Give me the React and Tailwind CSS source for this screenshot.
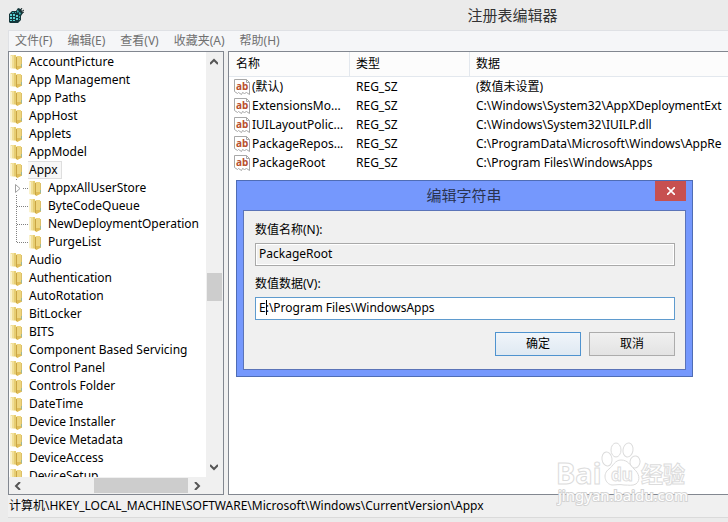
import React from 'react'

const BEFORE = ['AccountPicture', 'App Management', 'App Paths', 'AppHost', 'Applets', 'AppModel']
const CHILDREN = ['AppxAllUserStore', 'ByteCodeQueue', 'NewDeploymentOperation', 'PurgeList']
const AFTER = [
  'Audio',
  'Authentication',
  'AutoRotation',
  'BitLocker',
  'BITS',
  'Component Based Servicing',
  'Control Panel',
  'Controls Folder',
  'DateTime',
  'Device Installer',
  'Device Metadata',
  'DeviceAccess',
  'DeviceSetup',
]

const VALUES = [
  { name: '(默认)', type: 'REG_SZ', data: '(数值未设置)' },
  { name: 'ExtensionsMo...', type: 'REG_SZ', data: 'C:\\Windows\\System32\\AppXDeploymentExt' },
  { name: 'IUILayoutPolic...', type: 'REG_SZ', data: 'C:\\Windows\\System32\\IUILP.dll' },
  { name: 'PackageRepos...', type: 'REG_SZ', data: 'C:\\ProgramData\\Microsoft\\Windows\\AppRe' },
  { name: 'PackageRoot', type: 'REG_SZ', data: 'C:\\Program Files\\WindowsApps' },
]

function RegeditIcon() {
  return (
    <svg className="ml-px w-4 h-4" viewBox="0 0 16 16" aria-hidden="true">
      <path d="M0 7l3-3h4l2-3 3 1 1 2 1 2-2 3v4l-3 3H1l-1-1z" fill="#14363a" />
      <path d="M1 7h2v2H1zM4 7h2v2H4zM7 8h2v2H7zM1 10h2v2H1zM4 10h2v2H4zM7 11h2v2H7zM1 13h2v1H1zM4 13h2v1H4z" fill="#5ccfd0" />
      <path d="M3 5h2v1H3zM6 5h1v1H6zM10 9h1v2h-1zM10 12h1v1h-1z" fill="#35a7aa" />
      <path d="M8 3l2 1-1 2-1-1zM10 5l2 1-1 2-1-1z" fill="#3fb1b4" />
      <path d="M11 4l2-3M12 5l3-2M13 6l2-1" stroke="#1c2b2d" strokeWidth="1" />
    </svg>
  )
}

function FolderIcon() {
  return (
    <svg className="w-[15px] h-4 shrink-0" viewBox="0 0 15 16" aria-hidden="true">
      <path d="M1 2l1-1h5v14l-6-1z" fill="#f1df98" />
      <path d="M1 2h2v12H1z" fill="#faf2cd" />
      <path d="M5 1h2v13H5z" fill="#e6cd72" />
      <path d="M7 3l1-1h4v12l-4 2-1-1z" fill="#eed57e" />
      <path d="M7 3h1v12H7z" fill="#c9a544" />
      <path d="M8 12h4v2l-4 2z" fill="#e0bd58" />
      <path d="M12 3h1v11h-1z" fill="#dcc06a" />
      <path d="M12 10h1v3h-1z" fill="#9fb896" />
    </svg>
  )
}

function StringIcon() {
  return (
    <svg className="w-4 h-4 shrink-0" viewBox="0 0 16 16" aria-hidden="true">
      <path
        d="M.5.5h12l3 3v12l-3-2-2 1-2-1-1 2-3-2-1 1-3-2z"
        fill="#fff"
        stroke="#a8a8a8"
      />
      <path d="M12.500.5v3h3" fill="none" stroke="#a8a8a8" />
      <text x="2" y="11" fontSize="10" fontWeight="700" fill="#b9502f" fontFamily="Noto Sans, sans-serif">ab</text>
    </svg>
  )
}

function Chevron({ d }) {
  return (
    <svg className="w-2 h-2" viewBox="0 0 8 8" fill="none" stroke="#555" strokeWidth="2" aria-hidden="true">
      <path d={d} />
    </svg>
  )
}

function TreeItem({ label, selected }) {
  return (
    <li className="flex items-center h-[18px]">
      <FolderIcon />
      <span
        className={
          selected
            ? 'ml-1 pl-px pr-[3px] h-[18px] leading-[16px] border border-l-0 border-[#dedede] bg-[#f7f7f7]'
            : 'ml-[5px]'
        }
      >
        {label}
      </span>
    </li>
  )
}

function TreeChild({ label, expandable, last }) {
  return (
    <li className="flex items-center h-[18px]">
      <svg className="w-[19px] h-[18px] shrink-0" viewBox="0 0 19 18" fill="none" aria-hidden="true">
        <path d={last ? 'M7.500 0V9' : 'M7.500 0V18'} stroke="#808080" strokeDasharray="1 1" />
        <path d="M8 9.500H19" stroke="#808080" strokeDasharray="1 1" />
        {expandable && <path d="M4 2h10v14H4z" fill="#fff" />}
        {expandable && <path d="M6.500 5.500v8l4.500-4z" fill="#fff" stroke="#a0a0a0" />}
      </svg>
      <FolderIcon />
      <span className="ml-[5px]">{label}</span>
    </li>
  )
}

function KeyTree() {
  return (
    <section className="w-[216px] shrink-0 flex flex-col bg-[#f0f0f0] border border-[#828790]">
      <div className="flex flex-1 min-h-0">
        <ul className="flex-1 min-w-0 overflow-hidden bg-white pt-px whitespace-nowrap">
          {BEFORE.map((label) => (
            <TreeItem key={label} label={label} />
          ))}
          <TreeItem label="Appx" selected />
          {CHILDREN.map((label, i) => (
            <TreeChild key={label} label={label} expandable={i === 0} last={i === CHILDREN.length - 1} />
          ))}
          {AFTER.map((label) => (
            <TreeItem key={label} label={label} />
          ))}
        </ul>
        <div className="w-[17px] pr-px flex flex-col items-center">
          <button className="h-5 flex items-center" aria-label="Scroll up">
            <Chevron d="M0 6l4-4 4 4" />
          </button>
          <div className="grow-[200]" />
          <div className="w-[15px] h-7 bg-[#cdcdcd]" />
          <div className="grow-[156]" />
          <button className="h-5 flex items-center" aria-label="Scroll down">
            <Chevron d="M0 2l4 4 4-4" />
          </button>
        </div>
      </div>
      <div className="h-[17px] flex items-center pr-[17px]">
        <button className="w-[18px] flex justify-center" aria-label="Scroll left">
          <Chevron d="M6 0L2 4l4 4" />
        </button>
        <div className="flex-1" />
        <div className="w-[94px] h-[15px] bg-[#cdcdcd]" />
        <button className="w-[18px] flex justify-center" aria-label="Scroll right">
          <Chevron d="M2 0l4 4-4 4" />
        </button>
      </div>
    </section>
  )
}

function ValueList() {
  return (
    <section className="flex-1 min-w-0 overflow-hidden bg-white border border-r-0 border-[#828790]">
      <table className="w-full table-fixed border-separate border-spacing-0 whitespace-nowrap text-left">
        <thead className="bg-[#fcfcfc]">
          <tr className="h-[25px]">
            <th className="w-[121px] p-0 pl-[7px] font-normal border-r border-b border-[#e3e8ee]">名称</th>
            <th className="w-[120px] p-0 pl-[6px] font-normal border-r border-b border-[#e3e8ee]">类型</th>
            <th className="p-0 pl-[6px] font-normal border-b border-[#e3e8ee]">数据</th>
          </tr>
        </thead>
        <tbody>
          {VALUES.map((value) => (
            <tr key={value.name} className="h-[19px]">
              <td className="p-0 pl-[5px]">
                <div className="flex items-center gap-[2px]">
                  <StringIcon />
                  {value.name}
                </div>
              </td>
              <td className="p-0 pl-[6px]">{value.type}</td>
              <td className="p-0 pl-[6px]">{value.data}</td>
            </tr>
          ))}
        </tbody>
      </table>
    </section>
  )
}

function EditDialog() {
  return (
    <div
      role="dialog"
      aria-labelledby="dialog-title"
      className="absolute left-[236px] top-[180px] w-[457px] px-[6px] pb-[6px] bg-[#7598fd] border border-[#4f6db5]"
    >
      <div className="h-[29px] flex items-start">
        <h2 id="dialog-title" className="flex-1 pl-[30px] text-center text-[15px] leading-[29px] text-[#2a3350]">
          编辑字符串
        </h2>
        <button className="w-[31px] h-5 flex items-center justify-center bg-[#c75050]" aria-label="关闭">
          <svg className="w-2 h-2" viewBox="0 0 8 8" stroke="#fff" strokeWidth="1.600" aria-hidden="true">
            <path d="M0 0l8 8M8 0L0 8" />
          </svg>
        </button>
      </div>
      <form className="bg-[#f0f0f0] border border-[#5b74b8] pl-[11px] pr-[10px] pt-[10px] pb-[13px]">
        <label htmlFor="value-name" className="block leading-[18px]">
          数值名称(N):
        </label>
        <input
          id="value-name"
          readOnly
          defaultValue="PackageRoot"
          className="block w-full h-[23px] mt-1 px-[3px] pb-[2px] bg-[#f0f0f0] border border-[#a9a9a9] shadow-[inset_0_0_0_1px_#fff] outline-none"
        />
        <label htmlFor="value-data" className="block mt-[9px] leading-[18px]">
          数值数据(V):
        </label>
        <div className="relative mt-1">
          <input
            id="value-data"
            defaultValue="E:\Program Files\WindowsApps"
            className="block w-full h-[23px] px-[3px] pb-[2px] bg-white border border-[#5f9bce] outline-none"
          />
          <span className="absolute left-[11px] top-[3px] w-px h-[15px] bg-black" />
        </div>
        <div className="flex justify-end gap-2 mt-3">
          <button
            type="button"
            className="w-[86px] h-6 pb-px border border-[#4f93cf] bg-linear-to-b from-[#f0f5fa] to-[#dfe9f2]"
          >
            确定
          </button>
          <button
            type="button"
            className="w-[86px] h-6 pb-px border border-[#acacac] bg-linear-to-b from-[#f0f0f0] to-[#e3e3e3]"
          >
            取消
          </button>
        </div>
      </form>
    </div>
  )
}

function Watermark() {
  return (
    <svg
      className="absolute right-[36px] bottom-[12px] w-[136px] h-[70px] pointer-events-none"
      viewBox="0 0 136 70"
      fill="#fff"
      stroke="#dcdcdc"
      fontFamily="Noto Sans, Noto Sans CJK SC, sans-serif"
      aria-hidden="true"
    >
      <text x="0" y="44" fontSize="29" fontWeight="700">Bai</text>
      <ellipse cx="51" cy="19" rx="5" ry="7" transform="rotate(-8 51 19)" />
      <ellipse cx="60" cy="10" rx="5" ry="7" />
      <ellipse cx="72" cy="10" rx="5" ry="7" transform="rotate(10 72 10)" />
      <ellipse cx="79" cy="22" rx="5" ry="6" transform="rotate(10 79 22)" />
      <path d="M65 20c-6 0-8 6-12 9-7 5-4 15 3 16 4 0 8-1 12 0 5 0 8 1 12-1 5-4 3-11-2-15-4-4-6-9-13-9z" />
      <text x="55" y="41" fontSize="17" fontWeight="700">du</text>
      <text x="85" y="42" fontSize="22" fontWeight="700">经验</text>
      <text x="2" y="61" fontSize="15" stroke="#d4d4d4" strokeWidth="2" paintOrder="stroke">jingyan.baidu.com</text>
    </svg>
  )
}

export default function App() {
  return (
    <div className="relative h-screen overflow-hidden flex flex-col bg-[#ebebeb] pl-2 font-['Noto_Sans','Noto_Sans_CJK_SC',sans-serif] text-[12px] leading-[18px] text-black">
      <header className="h-[30px] shrink-0 flex items-center">
        <RegeditIcon />
        <h1 className="flex-1 pl-[272px] text-center text-[15px] text-[#333]">注册表编辑器</h1>
      </header>
      <nav className="h-[21px] shrink-0 flex items-center gap-[15px] pl-[6px] bg-[#f5f6f8] border-t border-l border-[#dfe1e5] text-[#707070]">
        <button>文件(F)</button>
        <button>编辑(E)</button>
        <button>查看(V)</button>
        <button>收藏夹(A)</button>
        <button>帮助(H)</button>
      </nav>
      <main className="flex-1 min-h-0 flex gap-1 bg-[#f0f0f0]">
        <KeyTree />
        <ValueList />
      </main>
      <footer className="h-[23px] mb-1 shrink-0 flex items-center pl-px bg-[#f0f0f0] border-b border-[#dadada]">
        计算机\HKEY_LOCAL_MACHINE\SOFTWARE\Microsoft\Windows\CurrentVersion\Appx
      </footer>
      <EditDialog />
      <Watermark />
    </div>
  )
}
